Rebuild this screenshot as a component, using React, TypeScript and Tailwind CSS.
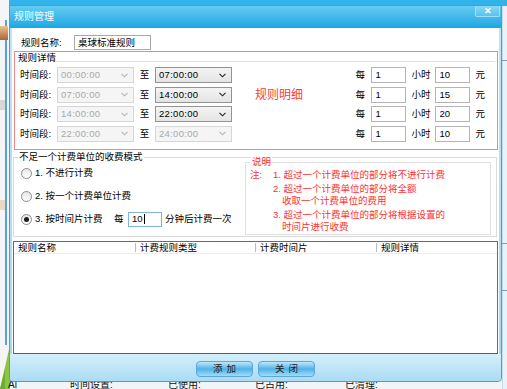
import React from "react";

function Chevron({ color }: { color: string }) {
  return (
    <svg width="7" height="5" viewBox="0 0 7 5" className="shrink-0">
      <path d="M0.5 0.8 L3.5 3.8 L6.5 0.8" fill="none" stroke={color} strokeWidth="1.1" />
    </svg>
  );
}

function Sel({ v, disabled }: { v: string; disabled?: boolean }) {
  return (
    <div
      className={
        disabled
          ? "w-[77px] h-[16px] flex items-center justify-between pl-[3px] pr-[5px] border border-[#d6d6d6] bg-[#f5f5f5] text-[#a9a9a9] tracking-[0.3px]"
          : "w-[77px] h-[16px] flex items-center justify-between pl-[3px] pr-[5px] border border-[#939393] bg-gradient-to-b from-[#f4f4f4] to-[#e4e4e4] text-black tracking-[0.3px]"
      }
    >
      <span>{v}</span>
      <Chevron color={disabled ? "#b5b5b5" : "#222"} />
    </div>
  );
}

function Inp({ v }: { v: string }) {
  return (
    <div className="w-[35px] h-[16px] flex items-center pl-[3px] border border-[#b4b4b4] bg-white">
      {v}
    </div>
  );
}

function Radio({ checked }: { checked?: boolean }) {
  return (
    <div className="w-[11px] h-[11px] rounded-full border border-[#8c8c8c] bg-gradient-to-b from-[#e6e6e6] to-white flex items-center justify-center shrink-0">
      {checked ? <div className="w-[5px] h-[5px] rounded-full bg-[#1e1e1e]" /> : null}
    </div>
  );
}

export default function App() {
  const timeRows = [
    { a: "00:00:00", b: "07:00:00", bDis: false },
    { a: "07:00:00", b: "14:00:00", bDis: false },
    { a: "14:00:00", b: "22:00:00", bDis: false },
    { a: "22:00:00", b: "24:00:00", bDis: true },
  ];
  const prices = ["10", "15", "20", "10"];

  return (
    <div className="relative w-[507px] h-[389px] overflow-hidden bg-[#f2f5f8] font-['Liberation_Sans','Noto_Sans_CJK_SC',sans-serif] text-[9.5px] leading-none text-black">
      {/* background desktop / app behind the dialog */}
      <div className="absolute left-[8px] top-0 w-[499px] h-[6px] bg-[#31b2e8]" />
      <div className="absolute left-0 top-0 w-[9px] h-[389px] bg-[#f3f5f7]" />
      <div className="absolute left-[5px] top-[20px] w-[2px] h-[325px] bg-[#5b9fe0]" />
      <div className="absolute left-0 top-[26px] w-[8px] h-[14px] bg-gradient-to-b from-[#e8c48c] to-[#a8643a]" />
      <div className="absolute left-0 top-[100px] w-[5px] h-[10px] bg-[#d8d8d8]" />
      <div className="absolute left-0 top-[200px] w-[5px] h-[10px] bg-[#e8dcc0]" />
      <svg className="absolute left-0 top-[345px]" width="10" height="44" viewBox="0 0 10 44">
        <polygon points="0,44 10,0 10,44" fill="#8cc63f" />
        <polygon points="0,44 5,24 5,44" fill="#6fae2a" />
      </svg>
      <div className="absolute right-0 top-[6px] w-[5px] h-[383px] bg-[#eaf2f7] border-l border-[#c9dce8]" />
      <div className="absolute right-0 top-[60px] w-[5px] h-px bg-[#7aa0b8]" />
      <div className="absolute right-0 top-[243px] w-[5px] h-px bg-[#7aa0b8]" />
      <div className="absolute right-0 top-[290px] w-[5px] h-px bg-[#7aa0b8]" />
      <div className="absolute left-[8px] top-[380px] flex text-[10px] text-[#111] whitespace-nowrap">
        <span className="w-[62px]">Ai</span>
        <span className="w-[98px]">时间设置:</span>
        <span className="w-[87px]">已使用:</span>
        <span className="w-[90px]">已占用:</span>
        <span>已清理:</span>
      </div>

      {/* dialog */}
      <div className="absolute left-[9px] top-[5px] w-[493px] h-[377px] flex flex-col border border-[#5a9ac2] rounded-b-[4px] bg-gradient-to-b from-[#bfe6f8] to-[#a3d9f2] overflow-hidden">
        {/* title bar */}
        <div className="h-[22px] shrink-0 flex items-start bg-gradient-to-b from-[#62caf1] to-[#15a8e3]">
          <span className="pl-[4px] mt-[6px] text-[10px] text-white">规则管理</span>
          <div className="ml-auto mr-[1px] w-[25px] h-[11px] flex items-center justify-center border border-[#a6dff5] border-t-0 rounded-b-[2px] bg-gradient-to-b from-[#8ad6f4] to-[#55c2ee] text-white text-[9px] font-bold">
            ✕
          </div>
        </div>

        {/* white content */}
        <div className="mx-[2px] h-[326px] shrink-0 bg-white flex flex-col">
          {/* name row */}
          <div className="mt-[7px] h-[15px] flex items-center pl-[9px]">
            <span className="w-[53px]">规则名称:</span>
            <div className="w-[77px] h-[15px] flex items-center pl-[3px] border border-[#a9a9a9]">桌球标准规则</div>
          </div>

          {/* rule details box (red) */}
          <div className="mt-[1px] ml-[2px] w-[484px] h-[99px] border border-[#f08787] flex flex-col">
            <div className="h-[12px] flex items-center pl-[3px]">
              <span>规则详情</span>
              <div className="flex-1 h-px mt-[6px] mr-[2px] bg-[#e2e2e2]" />
            </div>
            <div className="mt-[3px] flex">
              <div className="pl-[5px] flex flex-col gap-[3.5px]">
                {timeRows.map((r, i) => (
                  <div key={i} className="h-[16px] flex items-center">
                    <span className="w-[37px]">时间段:</span>
                    <Sel v={r.a} disabled />
                    <span className="w-[21px] text-center">至</span>
                    <Sel v={r.b} disabled={r.bDis} />
                  </div>
                ))}
              </div>
              <div className="ml-[23px] mt-[19.5px] h-[16px] flex items-center text-[12px] text-[#ff3a3a]">规则明细</div>
              <div className="ml-auto mr-[12px] flex flex-col gap-[3.5px]">
                {prices.map((p, i) => (
                  <div key={i} className="h-[16px] flex items-center">
                    <span className="w-[16px]">每</span>
                    <Inp v="1" />
                    <span className="w-[29px] text-center">小时</span>
                    <Inp v={p} />
                    <span className="ml-[5px]">元</span>
                  </div>
                ))}
              </div>
            </div>
          </div>

          {/* charge mode group */}
          <div className="relative mt-[7px] ml-[1px] w-[484px] h-[80px] border border-[#dadada] flex">
            <span className="absolute -top-[6px] left-[4px] bg-white px-[1px]">不足一个计费单位的收费模式</span>
            <div className="pl-[7px] pt-[7px] flex flex-col gap-[7px]">
              <div className="h-[16px] flex items-center gap-[3px]">
                <Radio />
                <span>1. 不进行计费</span>
              </div>
              <div className="h-[16px] flex items-center gap-[3px]">
                <Radio />
                <span>2. 按一个计费单位计费</span>
              </div>
              <div className="h-[16px] flex items-center gap-[3px]">
                <Radio checked />
                <span className="w-[76px]">3. 按时间片计费</span>
                <span className="w-[11px]">每</span>
                <div className="w-[34px] h-[15px] flex items-center pl-[3px] border border-[#7fb3e6] bg-white">
                  10<span className="ml-[1px] w-px h-[10px] bg-black" />
                </div>
                <span>分钟后计费一次</span>
              </div>
            </div>
            <div className="relative ml-auto mr-[5px] mt-[4px] w-[246px] h-[73px] border border-[#e2e2e2] text-[#ff3030]">
              <span className="absolute -top-[6px] left-[5px] bg-white px-[1px]">说明</span>
              <div className="flex pt-[6px] pl-[4px]">
                <span className="w-[23px] leading-[12px]">注:</span>
                <div className="flex flex-col gap-[2px] leading-[12px]">
                  <div>1. 超过一个计费单位的部分将不进行计费</div>
                  <div>
                    <div>2. 超过一个计费单位的部分将全额</div>
                    <div className="pl-[9px]">收取一个计费单位的费用</div>
                  </div>
                  <div>
                    <div>3. 超过一个计费单位的部分将根据设置的</div>
                    <div className="pl-[9px]">时间片进行收费</div>
                  </div>
                </div>
              </div>
            </div>
          </div>

          {/* list */}
          <div className="mt-[4px] ml-[1px] w-[485px] flex-1 border border-[#6a6a6a] border-b-[#5a5a5a] flex flex-col">
            <div className="h-[12px] flex items-center border-b border-[#ececec]">
              <div className="w-[121px] pl-[4px]">规则名称</div>
              <div className="w-[120px] flex items-center">
                <span className="w-px h-[9px] bg-[#bdbdbd]" />
                <span className="pl-[4px]">计费规则类型</span>
              </div>
              <div className="w-[121px] flex items-center">
                <span className="w-px h-[9px] bg-[#bdbdbd]" />
                <span className="pl-[4px]">计费时间片</span>
              </div>
              <div className="flex-1 flex items-center">
                <span className="w-px h-[9px] bg-[#bdbdbd]" />
                <span className="pl-[4px]">规则详情</span>
              </div>
            </div>
          </div>
        </div>

        {/* bottom button bar */}
        <div className="flex-1 flex items-center justify-center gap-[5px] pt-[3px] bg-gradient-to-b from-[#d3effb] to-[#abdcf3]">
          <div className="w-[57px] h-[16px] rounded-[4px] border border-[#5aa7da] bg-gradient-to-b from-[#bfe6f9] via-[#4db2e9] to-[#a2dbf5] flex items-center justify-center text-[#1a1a1a] tracking-[4px] pl-[4px]">
            添加
          </div>
          <div className="w-[57px] h-[16px] rounded-[4px] border border-[#5aa7da] bg-gradient-to-b from-[#bfe6f9] via-[#4db2e9] to-[#a2dbf5] flex items-center justify-center text-[#1a1a1a] tracking-[4px] pl-[4px]">
            关闭
          </div>
        </div>
      </div>
    </div>
  );
}
